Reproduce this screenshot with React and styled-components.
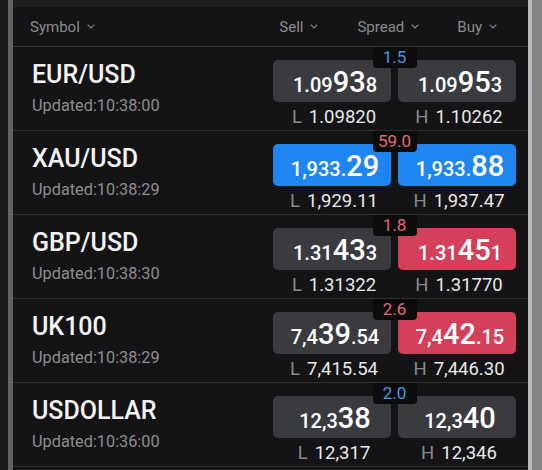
import styled, { createGlobalStyle } from "styled-components";

const GlobalStyle = createGlobalStyle`
  html, body {
    margin: 0;
    padding: 0;
    background: #1b1b1c;
  }
  body {
    font-family: Roboto, "Noto Sans", "Liberation Sans", sans-serif;
    -webkit-font-smoothing: antialiased;
  }
`;

const rows = [
  {
    symbol: "EUR/USD",
    updated: "10:38:00",
    spread: "1.5",
    spreadTone: "up",
    sell: { pre: "1.09", big: "93", post: "8", tone: "neutral" },
    buy: { pre: "1.09", big: "95", post: "3", tone: "neutral" },
    low: "1.09820",
    high: "1.10262",
  },
  {
    symbol: "XAU/USD",
    updated: "10:38:29",
    spread: "59.0",
    spreadTone: "down",
    sell: { pre: "1,933.", big: "29", post: "", tone: "blue" },
    buy: { pre: "1,933.", big: "88", post: "", tone: "blue" },
    low: "1,929.11",
    high: "1,937.47",
  },
  {
    symbol: "GBP/USD",
    updated: "10:38:30",
    spread: "1.8",
    spreadTone: "down",
    sell: { pre: "1.31", big: "43", post: "3", tone: "neutral" },
    buy: { pre: "1.31", big: "45", post: "1", tone: "red" },
    low: "1.31322",
    high: "1.31770",
  },
  {
    symbol: "UK100",
    updated: "10:38:29",
    spread: "2.6",
    spreadTone: "down",
    sell: { pre: "7,4", big: "39", post: ".54", tone: "neutral" },
    buy: { pre: "7,4", big: "42", post: ".15", tone: "red" },
    low: "7,415.54",
    high: "7,446.30",
  },
  {
    symbol: "USDOLLAR",
    updated: "10:36:00",
    spread: "2.0",
    spreadTone: "up",
    sell: { pre: "12,3", big: "38", post: "", tone: "neutral" },
    buy: { pre: "12,3", big: "40", post: "", tone: "neutral" },
    low: "12,317",
    high: "12,346",
  },
];

const boxColors = {
  neutral: "#3a3b3f",
  blue: "#1f86f1",
  red: "#d4405a",
};

const Frame = styled.div`
  display: flex;
  width: 542px;
  height: 470px;
  overflow: hidden;
  background: #1a1a1b;
`;

const BezelEdge = styled.div`
  flex: 0 0 ${(p) => p.$width}px;
  background: ${(p) => p.$color};
`;

const Screen = styled.div`
  flex: 1;
  display: flex;
  flex-direction: column;
  background: #141416;
  border-left: 5px solid #626264;
  border-right: 4px solid #bcbcbc;
`;

const TopBand = styled.div`
  height: 7px;
  background: #1e1e20;
`;

const Header = styled.div`
  display: flex;
  align-items: center;
  height: 39px;
  padding: 0 31px 0 17px;
  border-bottom: 1px solid #333336;
  color: #8b8b8d;
  font-size: 15px;
`;

const HeadCell = styled.div`
  display: flex;
  align-items: center;
  gap: 7px;
  flex: ${(p) => (p.$grow ? 1 : "none")};
  margin-right: ${(p) => p.$gap || 0}px;
`;

const Row = styled.div`
  display: flex;
  height: 83px;
  border-bottom: 1px solid #2e2e31;
`;

const SymbolCol = styled.div`
  flex: 1;
  padding: 13px 0 0 19px;
`;

const SymbolName = styled.div`
  font-size: 25px;
  line-height: 30px;
  font-weight: 500;
  color: #f4f4f4;
`;

const Updated = styled.div`
  margin-top: 6px;
  font-size: 16.3px;
  line-height: 20px;
  color: #8c8c8e;
`;

const Quotes = styled.div`
  position: relative;
  display: grid;
  grid-template-columns: 118px 118px;
  column-gap: 7px;
  padding: 13px 12px 0 0;
`;

const SpreadTab = styled.div`
  position: absolute;
  top: 0;
  left: 50%;
  transform: translateX(calc(-50% - 6px));
  width: 44px;
  height: 21px;
  background: #0c0c0d;
  border-radius: 0 0 4px 4px;
  text-align: center;
  font-size: 17px;
  line-height: 20px;
  color: ${(p) => (p.$tone === "up" ? "#3d9de2" : "#e0687b")};
`;

const PriceBox = styled.div`
  display: flex;
  justify-content: center;
  align-items: baseline;
  box-sizing: border-box;
  height: 42px;
  padding: 8px 0 0 6px;
  border-radius: 5px;
  background: ${(p) => boxColors[p.$tone]};
  color: #ffffff;
  font-weight: 500;
`;

const Small = styled.span`
  font-size: 20px;
  line-height: 20px;
`;

const Big = styled.span`
  font-size: 29px;
  line-height: 29px;
`;

const Range = styled.div`
  margin-top: 2px;
  padding-left: 4px;
  text-align: center;
  font-size: 18.5px;
  line-height: 20px;
  color: #e8e8e8;
`;

const RangeKey = styled.span`
  color: #89898b;
  margin-right: 7px;
`;

function Chevron() {
  return (
    <svg width="8" height="5" viewBox="0 0 8 5">
      <polyline
        points="0.7,0.7 4,4 7.3,0.7"
        fill="none"
        stroke="#8b8b8d"
        strokeWidth="1.1"
      />
    </svg>
  );
}

function Price({ quote }) {
  return (
    <PriceBox $tone={quote.tone}>
      <Small>{quote.pre}</Small>
      <Big>{quote.big}</Big>
      {quote.post && <Small>{quote.post}</Small>}
    </PriceBox>
  );
}

function QuoteRow({ row }) {
  return (
    <Row>
      <SymbolCol>
        <SymbolName>{row.symbol}</SymbolName>
        <Updated>Updated:{row.updated}</Updated>
      </SymbolCol>
      <Quotes>
        <Price quote={row.sell} />
        <Price quote={row.buy} />
        <Range>
          <RangeKey>L</RangeKey>
          {row.low}
        </Range>
        <Range>
          <RangeKey>H</RangeKey>
          {row.high}
        </Range>
        <SpreadTab $tone={row.spreadTone}>{row.spread}</SpreadTab>
      </Quotes>
    </Row>
  );
}

export default function App() {
  return (
    <>
      <GlobalStyle />
      <Frame>
        <BezelEdge $width={8} $color="#1b1b1c" />
        <Screen>
          <TopBand />
          <Header>
            <HeadCell $grow>
              Symbol <Chevron />
            </HeadCell>
            <HeadCell $gap={39}>
              Sell <Chevron />
            </HeadCell>
            <HeadCell $gap={38}>
              Spread <Chevron />
            </HeadCell>
            <HeadCell>
              Buy <Chevron />
            </HeadCell>
          </Header>
          {rows.map((row) => (
            <QuoteRow key={row.symbol} row={row} />
          ))}
        </Screen>
        <BezelEdge $width={10} $color="#858587" />
      </Frame>
    </>
  );
}
